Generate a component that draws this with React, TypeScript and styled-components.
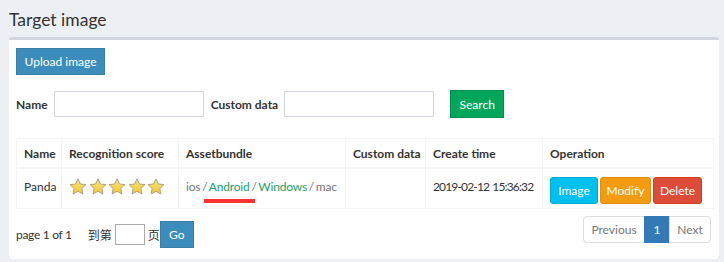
import React from "react";
import styled, { createGlobalStyle } from "styled-components";

const GlobalStyle = createGlobalStyle`
  body {
    margin: 0;
    background: #ecf0f5;
    font-family: Lato, "Noto Sans CJK SC", sans-serif;
    color: #333;
  }
`;

type Variant = "primary" | "success" | "info" | "warning" | "danger";

const palette: Record<Variant, { bg: string; border: string }> = {
  primary: { bg: "#3c8dbc", border: "#367fa9" },
  success: { bg: "#00a65a", border: "#008d4c" },
  info: { bg: "#00c0ef", border: "#00acd6" },
  warning: { bg: "#f39c12", border: "#e08e0b" },
  danger: { bg: "#dd4b39", border: "#d73925" },
};

const Star = () => (
  <svg width="18" height="17" viewBox="0 0 24 23">
    <defs>
      <linearGradient id="starFill" x1="0" y1="0" x2="0" y2="1">
        <stop offset="0" stopColor="#fbe27a" />
        <stop offset="1" stopColor="#f1c935" />
      </linearGradient>
    </defs>
    <path
      d="M12 1.2l3.2 6.9 7.5.9-5.5 5.2 1.4 7.5L12 18l-6.6 3.7 1.4-7.5L1.3 9l7.5-.9z"
      fill="url(#starFill)"
      stroke="#a49a78"
      strokeWidth="1.2"
      strokeLinejoin="round"
    />
  </svg>
);

const App = () => {
  return (
    <>
      <GlobalStyle />
      <Page>
        <Title>Target image</Title>
        <Box>
          <Button $variant="primary" $width={89}>Upload image</Button>
          <SearchRow>
            <Label>Name</Label>
            <TextInput />
            <Label $gapLeft={7}>Custom data</Label>
            <TextInput />
            <Button $variant="success" $width={54} $height={28} $gapLeft={16}>
              Search
            </Button>
          </SearchRow>
          <Table>
            <colgroup>
              <col style={{ width: 45 }} />
              <col style={{ width: 117 }} />
              <col style={{ width: 167 }} />
              <col style={{ width: 80 }} />
              <col style={{ width: 117 }} />
              <col style={{ width: 171 }} />
            </colgroup>
            <thead>
              <tr>
                <Th>Name</Th>
                <Th>Recognition score</Th>
                <Th>Assetbundle</Th>
                <Th>Custom data</Th>
                <Th>Create time</Th>
                <Th>Operation</Th>
              </tr>
            </thead>
            <tbody>
              <tr>
                <Td>Panda</Td>
                <Td>
                  <Stars>
                    {[0, 1, 2, 3, 4].map((i) => (
                      <Star key={i} />
                    ))}
                  </Stars>
                </Td>
                <Td $spacing={-0.2} $words={-1}>
                  <Muted>ios / </Muted>
                  <Marked>
                    <Available>Android</Available>
                  </Marked>
                  <Muted> / </Muted>
                  <Available>Windows</Available>
                  <Muted> / mac</Muted>
                </Td>
                <Td></Td>
                <Td $spacing={-0.85} $words={1}>2019-02-12 15:36:32</Td>
                <Td>
                  <Actions>
                    <Button $variant="info" $width={48}>Image</Button>
                    <Button $variant="warning" $width={51}>Modify</Button>
                    <Button $variant="danger" $width={49}>Delete</Button>
                  </Actions>
                </Td>
              </tr>
            </tbody>
          </Table>
          <Footer>
            <PageJump>
              <PageInfo>page 1 of 1</PageInfo>
              <Cjk>到第</Cjk>
              <PageInput />
              <Cjk>页</Cjk>
              <Button $variant="primary" $width={34} $height={27}>Go</Button>
            </PageJump>
            <Pager>
              <PagerItem $w={62}>Previous</PagerItem>
              <PagerItem $w={26} $active>1</PagerItem>
              <PagerItem $w={42}>Next</PagerItem>
            </Pager>
          </Footer>
        </Box>
      </Page>
    </>
  );
};

const Page = styled.div`
  padding: 9px 5px 0 9px;
`;

const Title = styled.h3`
  margin: 0;
  font-size: 17.5px;
  font-weight: 400;
  line-height: 22px;
  color: #333;
`;

const Box = styled.div`
  margin-top: 6px;
  width: 710px;
  box-sizing: border-box;
  background: #fff;
  border-top: 3px solid #d2d6de;
  border-radius: 3px;
  box-shadow: 0 1px 1px rgba(0, 0, 0, 0.1);
  padding: 8px 6px 11px 7px;
`;

const Button = styled.button<{ $variant: Variant; $width?: number; $height?: number; $gapLeft?: number }>`
  display: inline-flex;
  align-items: center;
  justify-content: center;
  box-sizing: border-box;
  width: ${(p) => (p.$width ? `${p.$width}px` : "auto")};
  height: ${(p) => (p.$height ? `${p.$height}px` : "27px")};
  margin: 0 0 0 ${(p) => (p.$gapLeft ? `${p.$gapLeft}px` : "0")};
  padding: 0;
  border: 1px solid ${(p) => palette[p.$variant].border};
  border-radius: ${(p) => (p.$variant === "primary" || p.$variant === "success" ? "0" : "3px")};
  background: ${(p) => palette[p.$variant].bg};
  color: #fff;
  font-family: Lato, sans-serif;
  font-size: 12px;
  white-space: nowrap;
  cursor: pointer;
`;

const SearchRow = styled.div`
  display: flex;
  align-items: center;
  margin-top: 15px;
  height: 28px;
`;

const Label = styled.label<{ $gapLeft?: number }>`
  margin-left: ${(p) => (p.$gapLeft ? `${p.$gapLeft}px` : "0")};
  margin-right: 6px;
  font-size: 12px;
  font-weight: 700;
  white-space: nowrap;
`;

const TextInput = styled.input`
  box-sizing: border-box;
  width: 150px;
  height: 26px;
  border: 1px solid #d2d6de;
  outline: none;
`;

const Table = styled.table`
  margin-top: 20px;
  width: 697px;
  table-layout: fixed;
  border-collapse: collapse;
  border: 1px solid #f4f4f4;
  font-size: 12px;
`;

const Th = styled.th`
  height: 28px;
  padding: 0 7px;
  text-align: left;
  font-weight: 700;
  white-space: nowrap;
  border: 1px solid #f4f4f4;
  border-bottom-width: 2px;
`;

const Td = styled.td<{ $spacing?: number; $words?: number }>`
  height: 27px;
  padding: 8px 7px 4px;
  vertical-align: top;
  line-height: 19px;
  white-space: nowrap;
  overflow: hidden;
  letter-spacing: ${(p) => (p.$spacing ? `${p.$spacing}px` : "normal")};
  word-spacing: ${(p) => (p.$words ? `${p.$words}px` : "normal")};
  border: 1px solid #f4f4f4;
`;

const Stars = styled.div`
  display: flex;
  gap: 1.5px;
  padding-top: 1px;
`;

const Muted = styled.span`
  color: #777;
  white-space: pre;
`;

const Available = styled.span`
  color: #1e9e69;
`;

const Marked = styled.span`
  position: relative;

  &::after {
    content: "";
    position: absolute;
    left: -5px;
    right: -5px;
    top: 20px;
    height: 4px;
    background: #ff3333;
  }
`;

const Actions = styled.div`
  display: flex;
  gap: 2px;
`;

const Footer = styled.div`
  display: flex;
  justify-content: space-between;
  align-items: flex-start;
  margin-top: 7px;
`;

const PageJump = styled.div`
  display: flex;
  align-items: center;
  margin-top: 5px;
  font-size: 12px;
`;

const PageInfo = styled.span`
  margin-right: 16px;
  letter-spacing: -0.3px;
`;

const Cjk = styled.span`
  font-family: "Noto Sans CJK SC", sans-serif;
  font-size: 12px;
`;

const PageInput = styled.input`
  box-sizing: border-box;
  width: 30px;
  height: 21px;
  margin: 0 3px;
  border: 1px solid #a9a9a9;
  outline: none;
`;

const Pager = styled.div`
  display: flex;
  margin-right: 2px;
`;

const PagerItem = styled.span<{ $w: number; $active?: boolean }>`
  display: flex;
  align-items: center;
  justify-content: center;
  box-sizing: border-box;
  width: ${(p) => p.$w}px;
  height: 27px;
  font-size: 12px;
  color: ${(p) => (p.$active ? "#fff" : "#777")};
  background: ${(p) => (p.$active ? "#337ab7" : "#fff")};
  border: 1px solid ${(p) => (p.$active ? "#337ab7" : "#ddd")};

  & + & {
    margin-left: -1px;
  }
  &:first-child {
    border-radius: 4px 0 0 4px;
  }
  &:last-child {
    border-radius: 0 4px 4px 0;
  }
`;

export default App;
